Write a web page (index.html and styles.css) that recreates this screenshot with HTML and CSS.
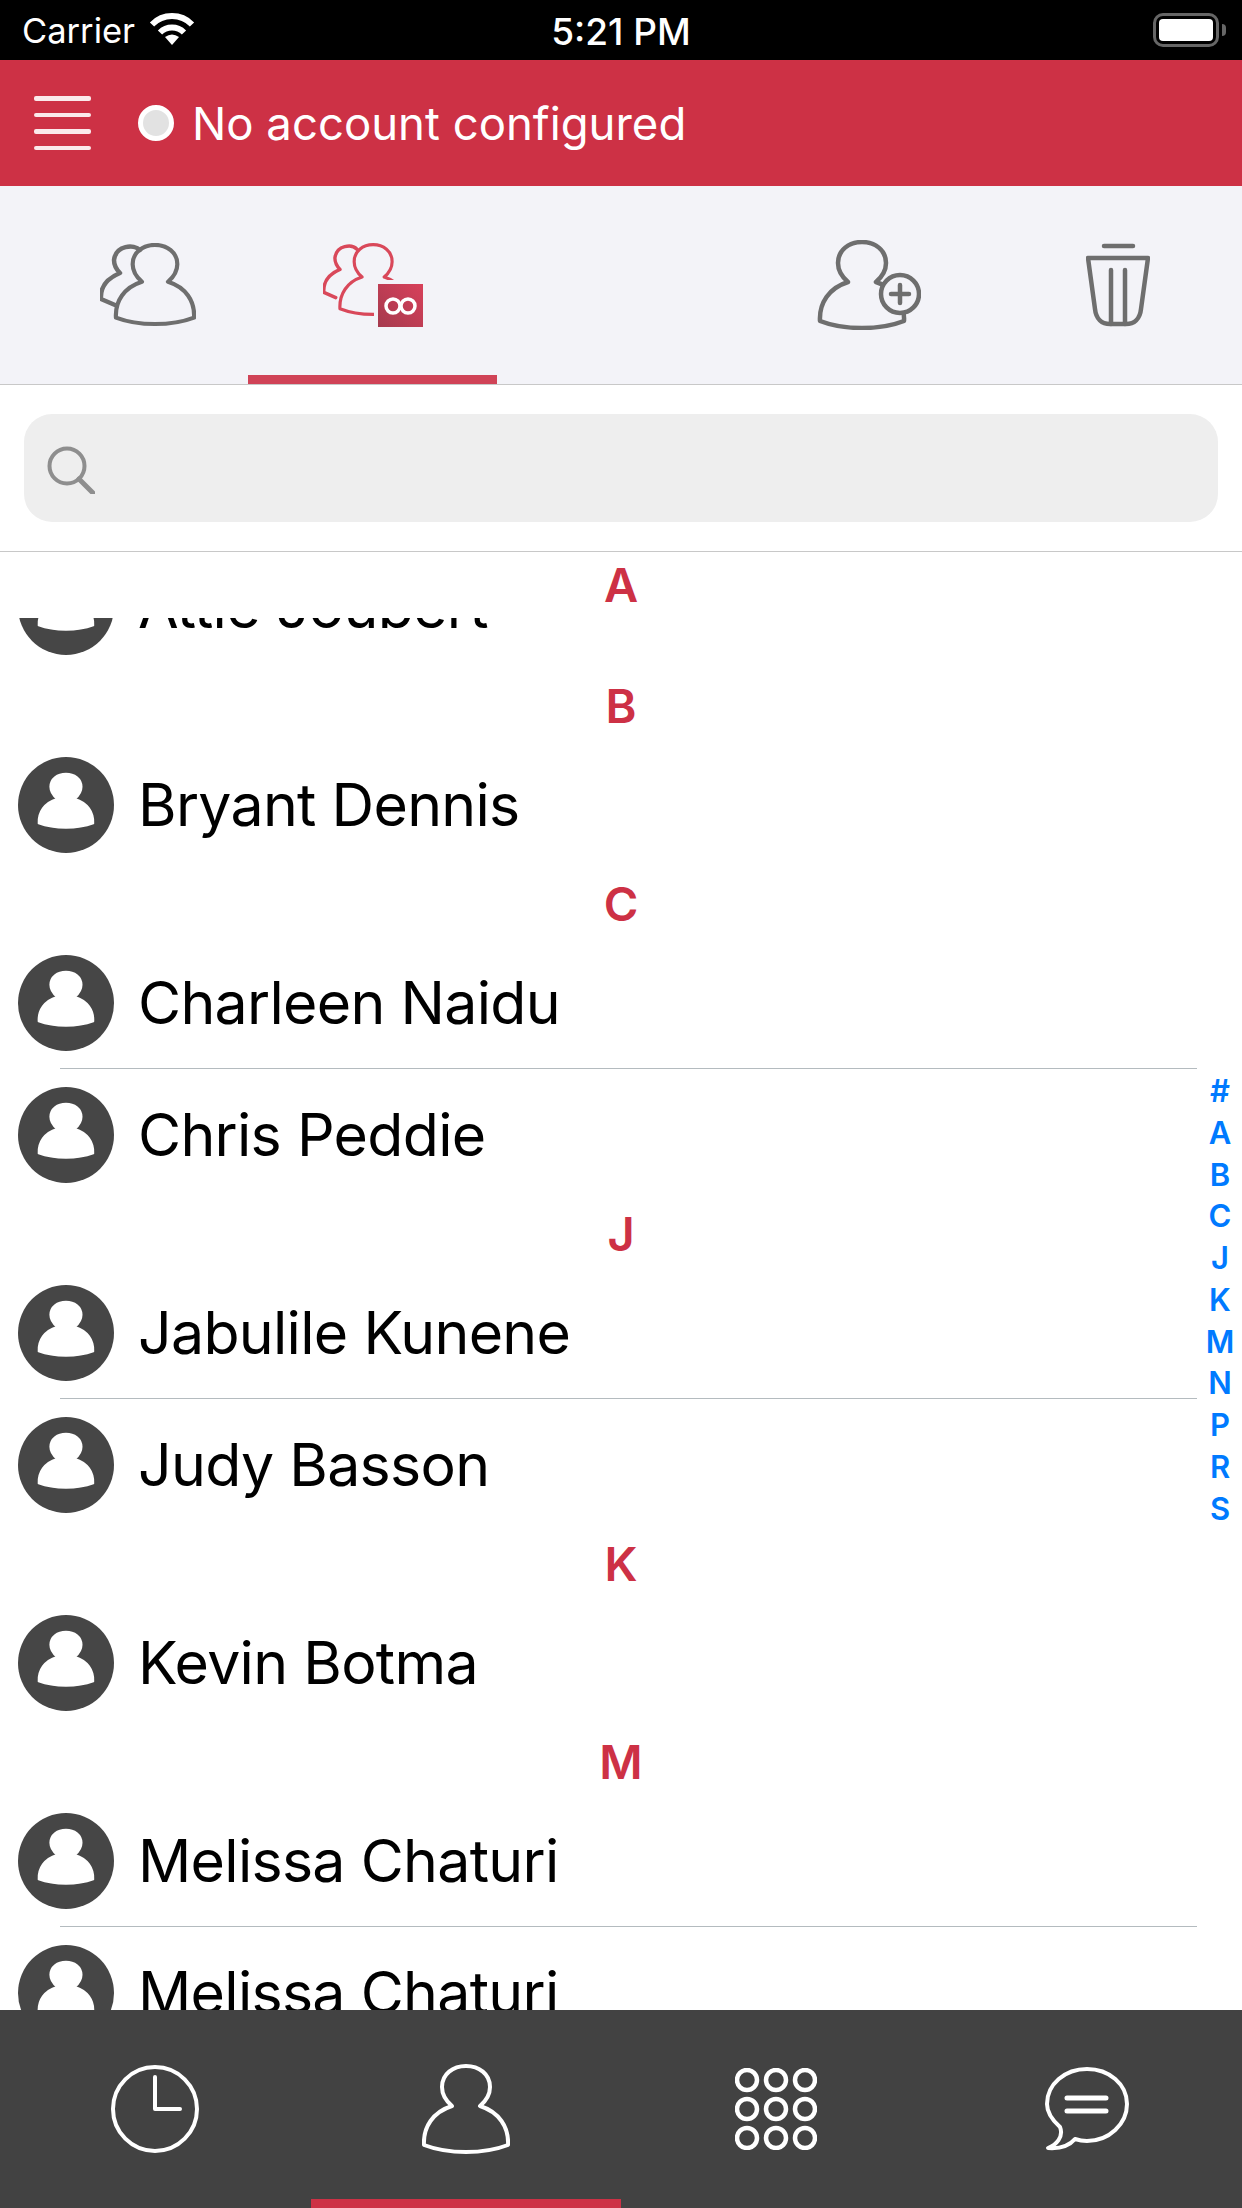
FILE: index.html
```html
<!DOCTYPE html>
<html lang="en">
<head>
    <meta charset="UTF-8">
    <title>Contacts</title>
    <link rel="stylesheet" href="styles.css">
</head>
<body>
    <svg class="sprite">
        <defs>
            <path id="person" d="M29 41C22 35 19 28 19 22C19 9 30 1 43 1C56 1 67 9 67 22C67 28 64 35 57 41C76 47 86 62 85 80C72 85 58 87 43 87C28 87 14 85 1 80C0 62 10 47 29 41Z"/>
            <path id="back-person" d="M40 7C34 1 16 2 14 17C14 22 16 26 20 30C8 35 0 43 1 56L15 62"/>
            <g id="avatar">
                <circle cx="48" cy="48" r="48" fill="#464646"/>
                <use href="#person" transform="translate(20 16) scale(.65 .63)" fill="#fff" stroke="#fff" stroke-width="3" stroke-linejoin="round"/>
            </g>
        </defs>
    </svg>

    <div class="screen">
        <div class="status-bar">
            <div class="status-left">
                <span>Carrier</span>
                <svg class="wifi" viewBox="0 0 46 33" width="46" height="33">
                    <path d="M3 12.5A28 28 0 0 1 43 12.5" fill="none" stroke="#fff" stroke-width="6"/>
                    <path d="M11 20.5A17 17 0 0 1 35 20.5" fill="none" stroke="#fff" stroke-width="6"/>
                    <path d="M23 33L16 25Q23 20 30 25Z" fill="#fff"/>
                </svg>
            </div>
            <div class="status-time">5:21 PM</div>
            <div class="status-right">
                <div class="battery"><div class="battery-level"></div></div>
                <div class="battery-nub"></div>
            </div>
        </div>

        <header class="app-header">
            <div class="menu-icon"><span></span><span></span><span></span><span></span></div>
            <div class="account-dot"></div>
            <div class="account-text">No account configured</div>
        </header>

        <nav class="top-tabs">
            <div class="top-tab">
                <svg class="line-icon first-icon" viewBox="0 0 96 84" width="96" height="84">
                    <use href="#back-person"/>
                    <use href="#person" transform="translate(15 1) scale(.93 .92)"/>
                </svg>
            </div>
            <div class="top-tab active">
                <svg class="line-icon red-icon" viewBox="0 0 100 84" width="100" height="84">
                    <defs>
                        <linearGradient id="badge-fill" x1="0" y1="1" x2="1" y2="0">
                            <stop offset="0" stop-color="#a53a4e"/>
                            <stop offset="1" stop-color="#d8405a"/>
                        </linearGradient>
                    </defs>
                    <g transform="scale(.85 .88)">
                        <use href="#back-person"/>
                        <use href="#person" transform="translate(19 1) scale(.93 .92)"/>
                    </g>
                    <rect class="badge-gap" x="51" y="37" width="49" height="47"/>
                    <rect class="badge" x="55" y="41" width="45" height="43" fill="url(#badge-fill)"/>
                    <circle class="badge-ring" cx="70" cy="63" r="7"/>
                    <circle class="badge-ring" cx="85" cy="63" r="7"/>
                </svg>
            </div>
            <div class="top-tab"></div>
            <div class="top-tab">
                <svg class="line-icon" viewBox="0 0 104 90" width="104" height="90">
                    <use href="#person" transform="translate(2 1)"/>
                    <circle class="plus-ring" cx="83" cy="54" r="19"/>
                    <path d="M74 54H92M83 45V63"/>
                </svg>
            </div>
            <div class="top-tab">
                <svg class="line-icon" viewBox="0 0 64 84" width="64" height="84">
                    <path d="M18 3H47"/>
                    <path d="M2 15H62L55 66C54 76 48 81 40 81H24C16 81 10 76 9 66Z"/>
                    <path d="M25 27V81M39 27V81"/>
                </svg>
            </div>
        </nav>

        <div class="search-area">
            <div class="search-box">
                <svg viewBox="0 0 48 48" width="48" height="48">
                    <circle cx="20" cy="20" r="17.5" fill="none" stroke="#8e8e8e" stroke-width="4"/>
                    <path d="M32 33L46 47" stroke="#8e8e8e" stroke-width="5" stroke-linecap="round"/>
                </svg>
            </div>
        </div>

        <main class="contact-list">
            <div class="stuck-header">A</div>
            <div class="list-scroll">
                <div class="row">
                    <svg class="avatar" viewBox="0 0 96 96"><use href="#avatar"/></svg>
                    <span class="name">Attie Joubert</span>
                </div>
                <div class="section-header">B</div>
                <div class="row">
                    <svg class="avatar" viewBox="0 0 96 96"><use href="#avatar"/></svg>
                    <span class="name">Bryant Dennis</span>
                </div>
                <div class="section-header">C</div>
                <div class="row">
                    <svg class="avatar" viewBox="0 0 96 96"><use href="#avatar"/></svg>
                    <span class="name">Charleen Naidu</span>
                </div>
                <div class="divider"></div>
                <div class="row">
                    <svg class="avatar" viewBox="0 0 96 96"><use href="#avatar"/></svg>
                    <span class="name">Chris Peddie</span>
                </div>
                <div class="section-header">J</div>
                <div class="row">
                    <svg class="avatar" viewBox="0 0 96 96"><use href="#avatar"/></svg>
                    <span class="name">Jabulile Kunene</span>
                </div>
                <div class="divider"></div>
                <div class="row">
                    <svg class="avatar" viewBox="0 0 96 96"><use href="#avatar"/></svg>
                    <span class="name">Judy Basson</span>
                </div>
                <div class="section-header">K</div>
                <div class="row">
                    <svg class="avatar" viewBox="0 0 96 96"><use href="#avatar"/></svg>
                    <span class="name">Kevin Botma</span>
                </div>
                <div class="section-header">M</div>
                <div class="row">
                    <svg class="avatar" viewBox="0 0 96 96"><use href="#avatar"/></svg>
                    <span class="name">Melissa Chaturi</span>
                </div>
                <div class="divider"></div>
                <div class="row">
                    <svg class="avatar" viewBox="0 0 96 96"><use href="#avatar"/></svg>
                    <span class="name">Melissa Chaturi</span>
                </div>
            </div>
            <div class="alpha-index">
                <span>#</span><span>A</span><span>B</span><span>C</span><span>J</span><span>K</span><span>M</span><span>N</span><span>P</span><span>R</span><span>S</span>
            </div>
        </main>

        <nav class="bottom-tabs">
            <div class="bottom-tab">
                <svg class="white-icon" viewBox="0 0 88 88" width="88" height="88">
                    <ellipse cx="44" cy="44" rx="42" ry="42"/>
                    <path d="M44 12V44H69"/>
                </svg>
            </div>
            <div class="bottom-tab active">
                <svg class="white-icon" viewBox="-1 -1 88 90" width="88" height="90">
                    <use href="#person"/>
                </svg>
            </div>
            <div class="bottom-tab">
                <svg class="white-icon keypad" viewBox="0 0 82 82" width="82" height="82">
                    <circle cx="12" cy="12" r="10"/><circle cx="41" cy="12" r="10"/><circle cx="70" cy="12" r="10"/>
                    <circle cx="12" cy="41" r="10"/><circle cx="41" cy="41" r="10"/><circle cx="70" cy="41" r="10"/>
                    <circle cx="12" cy="70" r="10"/><circle cx="41" cy="70" r="10"/><circle cx="70" cy="70" r="10"/>
                </svg>
            </div>
            <div class="bottom-tab">
                <svg class="white-icon" viewBox="0 0 84 84" width="84" height="84">
                    <path d="M15 60C6 52 2 45 2 37C2 17 20 2 42 2C64 2 82 17 82 37C82 57 64 74 42 74C37 74 33 73 30 72C25 78 17 82 3 81C11 78 19 70 15 60Z"/>
                    <path class="thick" d="M22 31H61M22 44H61"/>
                </svg>
            </div>
        </nav>
    </div>
</body>
</html>
```
FILE: styles.css
```css
* {
    box-sizing: border-box;
}

body {
    margin: 0;
    background: #fff;
    font-family: Inter, "Liberation Sans", sans-serif;
}

.sprite {
    display: none;
}

.screen {
    width: 1242px;
    height: 2208px;
    display: flex;
    flex-direction: column;
    overflow: hidden;
}

/* status bar */
.status-bar {
    height: 60px;
    background: #000;
    color: #fff;
    display: grid;
    grid-template-columns: 1fr auto 1fr;
    align-items: center;
    padding: 0 16px;
    font-size: 34.5px;
}

.status-left {
    display: flex;
    align-items: center;
    gap: 14px;
    padding-left: 6px;
}

.wifi {
    margin-bottom: 3px;
}

.status-time {
    font-size: 37px;
    font-weight: 500;
    margin-top: 2px;
}

.status-right {
    display: flex;
    align-items: center;
    justify-content: flex-end;
    gap: 3px;
}

.battery {
    width: 66px;
    height: 34px;
    border: 3px solid #666;
    border-radius: 10px;
    padding: 3px;
}

.battery-level {
    height: 100%;
    background: #fff;
    border-radius: 4px;
}

.battery-nub {
    width: 4px;
    height: 12px;
    background: #666;
    border-radius: 0 4px 4px 0;
}

/* red header */
.app-header {
    height: 126px;
    background: #cd3145;
    color: #fff;
    display: flex;
    align-items: center;
    padding-left: 34px;
}

.menu-icon {
    width: 57px;
    display: flex;
    flex-direction: column;
    gap: 12px;
}

.menu-icon span {
    height: 4.5px;
    background: #fbe9eb;
    border-radius: 2px;
}

.account-dot {
    width: 36px;
    height: 36px;
    margin-left: 47px;
    background: #e2e2e2;
    border: 5px solid #fff;
    border-radius: 50%;
}

.account-text {
    margin-left: 18px;
    font-size: 45.5px;
}

/* contact type tabs */
.top-tabs {
    height: 199px;
    background: #f3f3f8;
    border-bottom: 1px solid #c8c8c8;
    display: grid;
    grid-template-columns: repeat(5, 1fr);
}

.top-tab {
    display: flex;
    align-items: center;
    justify-content: center;
    padding-bottom: 1px;
}

.top-tab.active {
    border-bottom: 9px solid #d04357;
    padding-top: 9px;
    padding-bottom: 0;
}

.first-icon {
    margin-left: 48px;
}

.line-icon {
    fill: none;
    stroke: #6e6e6e;
    stroke-width: 4.5;
    stroke-linecap: round;
    stroke-linejoin: round;
}

.red-icon {
    stroke: #d9485a;
    stroke-width: 4;
}

.badge-gap {
    fill: #f3f3f8;
    stroke: none;
}

.badge {
    stroke: none;
}

.badge-ring {
    fill: none;
    stroke: #fff;
    stroke-width: 3.5;
}

.plus-ring {
    fill: #f3f3f8;
}

/* search */
.search-area {
    height: 167px;
    padding: 29px 24px 0;
    border-bottom: 1px solid #c8c8c8;
}

.search-box {
    height: 108px;
    background: #eee;
    border-radius: 28px;
    display: flex;
    align-items: center;
    padding: 4px 0 0 23px;
}

/* list */
.contact-list {
    flex: 1;
    min-height: 0;
    position: relative;
    overflow: hidden;
}

.list-scroll {
    margin-top: -11px;
}

.stuck-header {
    position: absolute;
    top: 0;
    left: 0;
    right: 0;
    z-index: 1;
    background: #fff;
}

.stuck-header,
.section-header {
    height: 66px;
    line-height: 66px;
    text-align: center;
    color: #cd3145;
    font-size: 47px;
    font-weight: 600;
}

.row {
    height: 132px;
    display: flex;
    align-items: center;
    padding-left: 18px;
}

.avatar {
    width: 96px;
    height: 96px;
    flex-shrink: 0;
}

.name {
    margin-left: 24px;
    padding-bottom: 2px;
    font-size: 59px;
    letter-spacing: -0.7px;
    color: #000;
}

.divider {
    height: 1px;
    margin: -1px 45px 0 60px;
    background: #b4bbbf;
}

.alpha-index {
    position: absolute;
    top: 518px;
    right: 0;
    width: 44px;
    display: flex;
    flex-direction: column;
    align-items: center;
    color: #007aff;
    font-size: 31px;
    font-weight: 600;
}

.alpha-index span {
    height: 41.75px;
    line-height: 41.75px;
}

/* bottom tabs */
.bottom-tabs {
    height: 198px;
    background: #424242;
    display: grid;
    grid-template-columns: repeat(4, 1fr);
}

.bottom-tab {
    display: flex;
    align-items: center;
    justify-content: center;
}

.bottom-tab.active {
    border-bottom: 9px solid #cd3145;
    padding-top: 9px;
}

.white-icon {
    fill: none;
    stroke: #fff;
    stroke-width: 4;
    stroke-linecap: round;
    stroke-linejoin: round;
}

.keypad {
    stroke-width: 4.5;
}

.thick {
    stroke-width: 5;
}
```
